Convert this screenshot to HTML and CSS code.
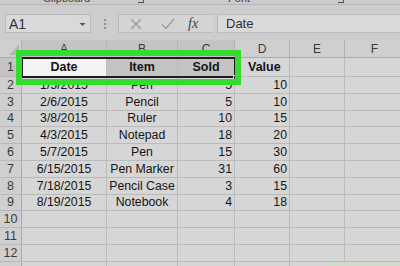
FILE: index.html
```html
<!DOCTYPE html>
<html>
<head>
<meta charset="utf-8">
<link rel="stylesheet" href="styles.css">
</head>
<body>
<div class="app">
  <div class="ribbon">
    <span class="grp clip">Clipboard</span>
    <span class="launch l1"></span>
    <span class="grp font">Font</span>
    <span class="launch l2"></span>
  </div>
  <div class="fbar">
    <div class="namebox"><span>A1</span><svg class="caret" width="7" height="5" viewBox="0 0 7 5"><path d="M0.5 1 L3.5 4 L6.5 1 Z" fill="#555"/></svg></div>
    <div class="dots"><i></i><i></i><i></i></div>
    <div class="iconbox">
      <svg class="ic" width="12" height="12" viewBox="0 0 12 12"><path d="M1 1 L11 11 M11 1 L1 11" stroke="#9a9a9a" stroke-width="1.3" fill="none"/></svg>
      <svg class="ic" width="14" height="12" viewBox="0 0 14 12"><path d="M1 6.5 L5 10.5 L13 1" stroke="#9a9a9a" stroke-width="1.3" fill="none"/></svg>
      <span class="fx">fx</span>
    </div>
    <div class="formula">Date</div>
  </div>
  <div class="sheet">
    <div class="grid">
      <div class="hd corner"><span class="tri"></span></div>
      <div class="hd col sel">A</div><div class="hd col sel">B</div><div class="hd col sel">C</div><div class="hd col">D</div><div class="hd col">E</div><div class="hd col">F</div>

      <div class="rh r1 sel">1</div>
      <div class="c r1 ctr b active">Date</div><div class="c r1 ctr b hi">Item</div><div class="c r1 ctr b hi">Sold</div><div class="c r1 b val">Value</div><div class="c r1"></div><div class="c r1"></div>

      <div class="rh">2</div><div class="c ctr">1/5/2015</div><div class="c ctr">Pen</div><div class="c rt">5</div><div class="c rt">10</div><div class="c"></div><div class="c"></div>
      <div class="rh">3</div><div class="c ctr">2/6/2015</div><div class="c ctr">Pencil</div><div class="c rt">5</div><div class="c rt">10</div><div class="c"></div><div class="c"></div>
      <div class="rh">4</div><div class="c ctr">3/8/2015</div><div class="c ctr">Ruler</div><div class="c rt">10</div><div class="c rt">15</div><div class="c"></div><div class="c"></div>
      <div class="rh">5</div><div class="c ctr">4/3/2015</div><div class="c ctr">Notepad</div><div class="c rt">18</div><div class="c rt">20</div><div class="c"></div><div class="c"></div>
      <div class="rh">6</div><div class="c ctr">5/7/2015</div><div class="c ctr">Pen</div><div class="c rt">15</div><div class="c rt">30</div><div class="c"></div><div class="c"></div>
      <div class="rh">7</div><div class="c ctr">6/15/2015</div><div class="c ctr">Pen Marker</div><div class="c rt">31</div><div class="c rt">60</div><div class="c"></div><div class="c"></div>
      <div class="rh">8</div><div class="c ctr">7/18/2015</div><div class="c ctr">Pencil Case</div><div class="c rt">3</div><div class="c rt">15</div><div class="c"></div><div class="c"></div>
      <div class="rh">9</div><div class="c ctr">8/19/2015</div><div class="c ctr">Notebook</div><div class="c rt">4</div><div class="c rt">18</div><div class="c"></div><div class="c"></div>
      <div class="rh">10</div><div class="c"></div><div class="c"></div><div class="c"></div><div class="c"></div><div class="c"></div><div class="c"></div>
      <div class="rh">11</div><div class="c"></div><div class="c"></div><div class="c"></div><div class="c"></div><div class="c"></div><div class="c"></div>
      <div class="rh">12</div><div class="c"></div><div class="c"></div><div class="c"></div><div class="c"></div><div class="c"></div><div class="c"></div>
      <div class="rh"></div><div class="c"></div><div class="c"></div><div class="c"></div><div class="c"></div><div class="c"></div><div class="c"></div>
    </div>
    <div class="selection"><span class="handle"></span></div>
    <div class="highlight"></div>
    <div class="tabhint"></div>
  </div>
</div>
</body>
</html>
```
FILE: styles.css
```css
* { box-sizing: border-box; }
html, body { margin: 0; padding: 0; }
body {
  width: 400px;
  height: 266px;
  overflow: hidden;
  background: #d6d6d6;
  font-family: "Liberation Sans", Arial, sans-serif;
  color: #151515;
}
.app { width: 400px; height: 266px; overflow: hidden; display: flex; flex-direction: column; }

.ribbon {
  flex: 0 0 5px;
  height: 5px;
  background: #cbcbcb;
  border-bottom: 1px solid #b6b6b6;
  position: relative;
  overflow: hidden;
  display: flex;
}
.grp {
  font-size: 11px;
  line-height: 11px;
  color: #444;
  margin-top: -7px;
  white-space: nowrap;
}
.clip { margin-left: 43px; }
.launch {
  width: 6px; height: 6px;
  border-right: 1px solid #555;
  border-bottom: 1px solid #555;
  margin-top: -3px;
}
.l1 { margin-left: 48px; }
.font { margin-left: 84px; }
.l2 { margin-left: 88px; }

.fbar {
  flex: 0 0 35px;
  height: 35px;
  background: #cdcdcd;
  display: flex;
  align-items: flex-start;
  padding: 9px 0 0 5px;
}
.namebox {
  width: 86px;
  height: 19px;
  background: #d9d9d9;
  border: 1px solid #b9b9b9;
  display: flex;
  align-items: center;
  justify-content: space-between;
  padding: 0 4px 0 3px;
  font-size: 14px;
  color: #333;
}
.caret { margin-top: 1px; }
.dots {
  width: 27px;
  height: 19px;
  display: flex;
  flex-direction: column;
  align-items: center;
  justify-content: center;
  gap: 2px;
}
.dots i { display: block; width: 2px; height: 2px; background: #8d8d8d; }
.iconbox {
  width: 96px;
  height: 19px;
  background: #d4d4d4;
  border: 1px solid #bcbcbc;
  border-right: none;
  display: flex;
  align-items: center;
  padding-left: 11px;
}
.iconbox .ic:nth-child(1) { margin-right: 19px; }
.iconbox .ic:nth-child(2) { margin-right: 13px; }
.fx {
  font-family: "Liberation Serif", "Times New Roman", serif;
  font-style: italic;
  font-size: 14px;
  color: #444;
}
.formula {
  flex: 1;
  height: 19px;
  margin-left: 3px;
  background: #d9d9d9;
  border: 1px solid #bcbcbc;
  border-right: none;
  font-size: 13px;
  line-height: 17px;
  padding-left: 8px;
  color: #333;
}

.sheet { position: relative; flex: 1 1 auto; min-height: 0; }
.grid {
  display: grid;
  grid-template-columns: 22px 85px 71px 57px 55px 55px 60px;
  grid-template-rows: 18px 19px repeat(11, 16.8px) 16.8px;
}
.hd {
  background: #cfcfcf;
  border-right: 1px solid #b3b3b3;
  border-bottom: 1px solid #a9a9a9;
  font-size: 12px;
  color: #3a3a3a;
  display: flex;
  align-items: center;
  justify-content: center;
}
.hd.sel { background: #c4c4c4; }
.corner { position: relative; }
.tri {
  position: absolute;
  right: 2px; bottom: 2px;
  width: 0; height: 0;
  border-left: 10px solid transparent;
  border-bottom: 10px solid #b4b4b4;
}
.rh {
  background: #cfcfcf;
  border-right: 1px solid #a9a9a9;
  border-bottom: 1px solid #b9b9b9;
  font-size: 12.5px;
  color: #3a3a3a;
  display: flex;
  align-items: center;
  justify-content: center;
}
.rh.sel { background: #c4c4c4; }
.c {
  background: #d6d6d6;
  border-right: 1px solid #bbbbbb;
  border-bottom: 1px solid #bbbbbb;
  font-size: 12.3px;
  display: flex;
  align-items: center;
  white-space: nowrap;
  overflow: hidden;
  color: #151515;
}
.ctr { justify-content: center; }
.rt { justify-content: flex-end; padding-right: 2px; }
.b { font-weight: bold; font-size: 12.5px; }
.val { padding-left: 13px; }
.active { background: #f4f4f4; }
.hi { background: #c3c3c3; }

.selection {
  position: absolute;
  left: 21px; top: 17px;
  width: 215px; height: 21px;
  border: 2px solid #1c1c1c;
}
.handle {
  position: absolute;
  right: -4px; bottom: -4px;
  width: 5px; height: 5px;
  background: #1c1c1c;
  border: 1px solid #d6d6d6;
}
.highlight {
  position: absolute;
  left: 16px; top: 10px;
  width: 225px; height: 35px;
  border: 6px solid #33dc2f;
}
.tabhint {
  position: absolute;
  left: 330px; top: 222px;
  width: 70px; height: 6px;
  background: #cfdcc8;
}
```
